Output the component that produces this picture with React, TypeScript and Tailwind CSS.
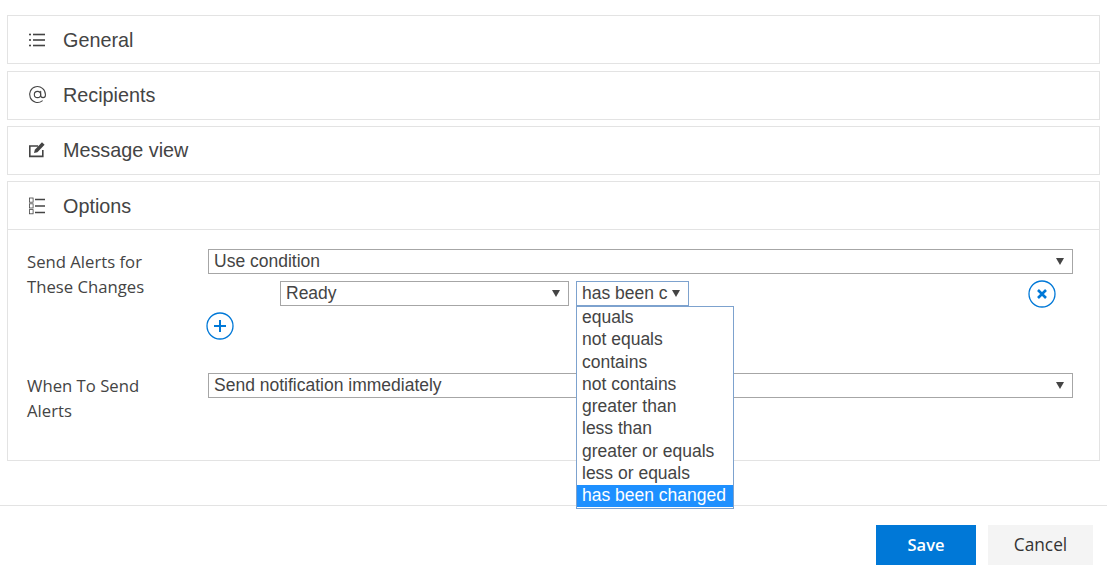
import type { ReactNode } from 'react';
import { AtSign } from 'lucide-react';

const options = [
  'equals',
  'not equals',
  'contains',
  'not contains',
  'greater than',
  'less than',
  'greater or equals',
  'less or equals',
  'has been changed',
];

function ListIcon() {
  return (
    <svg width="18" height="18" viewBox="0 0 18 18" fill="#444">
      <rect x="1" y="2.7" width="2" height="1.6" />
      <rect x="1" y="8.2" width="2" height="1.6" />
      <rect x="1" y="13.7" width="2" height="1.6" />
      <rect x="5" y="2.7" width="12" height="1.6" />
      <rect x="5" y="8.2" width="12" height="1.6" />
      <rect x="5" y="13.7" width="12" height="1.6" />
    </svg>
  );
}

function EditIcon() {
  return (
    <svg width="18" height="18" viewBox="0 0 18 18" fill="none">
      <path d="M10 5H1.8v10.4h13V9" stroke="#444" strokeWidth="1.6" />
      <path d="M6 12l.8-3.2L14 1.2 16.6 3.8 9.4 11.2z" fill="#444" />
    </svg>
  );
}

function OptionsIcon() {
  return (
    <svg width="18" height="18" viewBox="0 0 18 18" fill="none" stroke="#444">
      <rect x="1.5" y="1" width="3.6" height="4.2" strokeWidth="0.8" />
      <rect x="1.5" y="6.8" width="3.6" height="4.2" strokeWidth="0.8" />
      <rect x="1.5" y="12.6" width="3.6" height="4.2" strokeWidth="0.8" />
      <path d="M7 2.5h10M7 9h10M7 15.5h10" strokeWidth="1.5" />
    </svg>
  );
}

function Panel({ icon, title, lift }: { icon: ReactNode; title: string; lift?: boolean }) {
  return (
    <div className="flex h-[47px] items-center pl-[20px] text-[19.8px] text-[#444]">
      <span className={`flex w-[35px] items-center ${lift ? 'mb-[2px]' : ''}`}>{icon}</span>
      <span className={lift ? '' : 'mt-[2px]'}>{title}</span>
    </div>
  );
}

function Caret() {
  return (
    <svg width="8" height="7" viewBox="0 0 8 7" className="shrink-0" fill="#444">
      <path d="M0 0h8L4 7z" />
    </svg>
  );
}

function Select({ value, className }: { value: string; className: string }) {
  return (
    <div className={`flex h-[25px] items-center justify-between border pl-[5px] pr-[8px] text-[17.5px] text-[#444] ${className}`}>
      <span className="overflow-hidden whitespace-nowrap">{value}</span>
      <Caret />
    </div>
  );
}

function CircleButton({ kind }: { kind: 'add' | 'remove' }) {
  return (
    <svg width="28" height="28" viewBox="0 0 28 28" fill="none" stroke="#0078d7">
      <circle cx="14" cy="14" r="13" strokeWidth="1.3" />
      {kind === 'add' ? (
        <path d="M14 8v12M8 14h12" strokeWidth="2" />
      ) : (
        <path d="M10 10l8 8M18 10l-8 8" strokeWidth="2.6" />
      )}
    </svg>
  );
}

export default function App() {
  return (
    <div className="h-[570px] w-[1107px] overflow-hidden bg-white font-['Liberation_Sans',Arial,sans-serif]">
      <div className="flex flex-col gap-[6px] px-[7px] pt-[15px]">
        <div className="border border-[#e3e3e3]">
          <Panel icon={<ListIcon />} title="General" />
        </div>
        <div className="mt-[1px] border border-[#e3e3e3]">
          <Panel icon={<AtSign size={19} strokeWidth={1.4} />} title="Recipients" lift />
        </div>
        <div className="border border-[#e3e3e3]">
          <Panel icon={<EditIcon />} title="Message view" lift />
        </div>
        <div className="border border-[#e3e3e3]">
          <div className="border-b border-[#e3e3e3]">
            <Panel icon={<OptionsIcon />} title="Options" />
          </div>
          <div className="h-[230px] pl-[19px] pr-[19px] pt-[19px] font-['Open_Sans',sans-serif] text-[16.7px] leading-[25px] text-[#444]">
            <div className="flex pr-[7px]">
              <div className="w-[181px] shrink-0">
                Send Alerts for
                <br />
                These Changes
              </div>
              <div className="flex-1 font-['Liberation_Sans',Arial,sans-serif]">
                <Select value="Use condition" className="w-full border-[#a6a6a6]" />
                <div className="mt-[7px] flex items-start pl-[72px]">
                  <Select value="Ready" className="w-[289px] border-[#a6a6a6]" />
                  <div className="relative ml-[7px]">
                    <Select value="has been c" className="w-[113px] border-[#7da2ce]" />
                    <div className="absolute left-0 top-[25px] z-10 h-[203px] w-[158px] border border-[#7da2ce] bg-white">
                      {options.map((o) => (
                        <div
                          key={o}
                          className={
                            o === 'has been changed'
                              ? 'h-[22.25px] bg-[#1e90ff] pl-[5px] text-[17.5px] leading-[21px] text-white'
                              : 'h-[22.25px] pl-[5px] text-[17.5px] leading-[21px] text-[#444]'
                          }
                        >
                          {o}
                        </div>
                      ))}
                    </div>
                  </div>
                  <div className="ml-auto mr-[17px] mt-[-1px] flex">
                    <CircleButton kind="remove" />
                  </div>
                </div>
                <div className="ml-[-2px] mt-[4px] flex">
                  <CircleButton kind="add" />
                </div>
              </div>
            </div>
            <div className="mt-[33px] flex pr-[7px]">
              <div className="w-[181px] shrink-0">
                When To Send
                <br />
                Alerts
              </div>
              <div className="flex-1 font-['Liberation_Sans',Arial,sans-serif]">
                <Select value="Send notification immediately" className="w-full border-[#a6a6a6]" />
              </div>
            </div>
          </div>
        </div>
      </div>
      <div className="mt-[44px] flex justify-end gap-[12px] border-t border-[#e3e3e3] pr-[14px] pt-[19px] font-['Open_Sans',sans-serif]">
        <button className="h-[40px] w-[100px] bg-[#0078d7] text-[16.5px] font-semibold text-white">Save</button>
        <button className="h-[40px] w-[105px] bg-[#f4f4f4] text-[17.3px] text-[#333]">Cancel</button>
      </div>
    </div>
  );
}
